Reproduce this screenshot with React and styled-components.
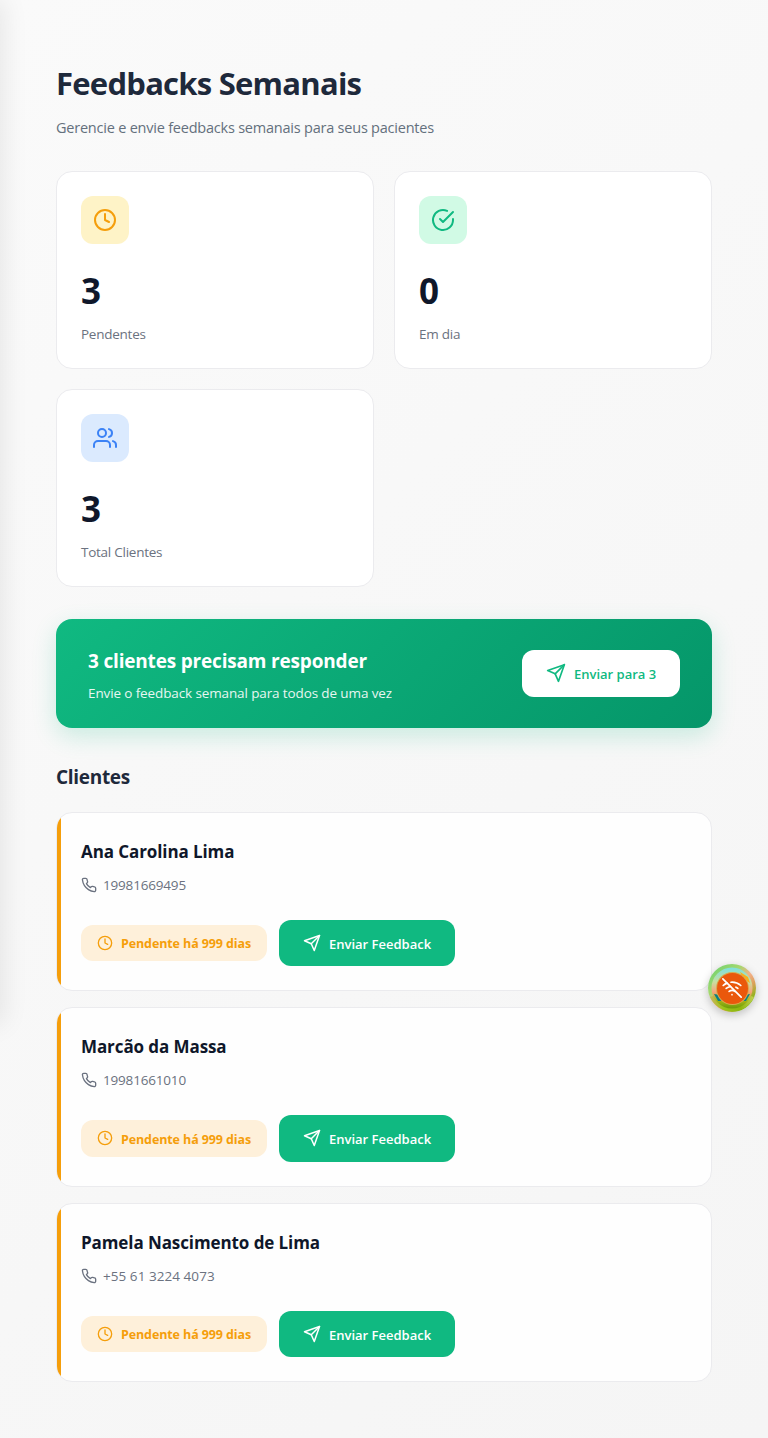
import React from "react";
import styled, { createGlobalStyle } from "styled-components";
import { FiClock, FiCheckCircle, FiUsers, FiSend, FiPhone, FiWifiOff } from "react-icons/fi";

const GlobalStyle = createGlobalStyle`
  * { box-sizing: border-box; }
  body {
    margin: 0;
    font-family: "Segoe UI", "Open Sans", "Noto Sans", sans-serif;
    color: #0f172a;
  }
  h1, h2, h3, p { margin: 0; }
`;

const Page = styled.main`
  position: relative;
  min-height: 1438px;
  padding: 55px 56px 56px;
  overflow: hidden;
  background: linear-gradient(135deg, #fafafa 0%, #f5f5f5 100%);
`;

const DrawerShadow = styled.div`
  position: absolute;
  top: 0;
  left: -280px;
  width: 280px;
  height: 1024px;
  box-shadow: 4px 0 24px rgba(0, 0, 0, 0.08);
`;

const Title = styled.h1`
  font-size: 31px;
  line-height: 56px;
  font-weight: 700;
  letter-spacing: -0.75px;
  color: #1e293b;
`;

const Subtitle = styled.p`
  margin-top: 4px;
  font-size: 14.5px;
  line-height: 26px;
  letter-spacing: -0.22px;
  color: #64707d;
`;

const Stats = styled.section`
  display: grid;
  grid-template-columns: 1fr 1fr;
  gap: 20px;
  margin-top: 30px;
`;

const StatCard = styled.article`
  height: 198px;
  padding: 24px;
  border: 1px solid #ebebee;
  border-radius: 16px;
  background: #fff;
`;

const StatIcon = styled.div`
  display: grid;
  place-items: center;
  width: 48px;
  height: 48px;
  border-radius: 12px;
  color: ${(p) => p.$color};
  background: ${(p) => p.$tint};
  font-size: 24px;
`;

const StatValue = styled.div`
  margin-top: 24px;
  font-size: 35px;
  line-height: 46px;
  font-weight: 700;
`;

const StatLabel = styled.div`
  margin-top: 10px;
  font-size: 13.5px;
  line-height: 20px;
  letter-spacing: -0.25px;
  color: #6b7280;
`;

const Banner = styled.section`
  display: flex;
  align-items: center;
  justify-content: space-between;
  height: 109px;
  margin-top: 32px;
  padding: 0 32px;
  border-radius: 16px;
  color: #fff;
  background: linear-gradient(135deg, #10b981 0%, #059669 100%);
  box-shadow: 0 8px 24px rgba(16, 185, 129, 0.2);
`;

const BannerCopy = styled.div`
  padding-top: 2px;
`;

const BannerTitle = styled.h2`
  font-size: 19px;
  line-height: 28px;
  font-weight: 700;
  letter-spacing: -0.18px;
`;

const BannerText = styled.p`
  margin-top: 8px;
  font-size: 13.5px;
  line-height: 20px;
  letter-spacing: -0.12px;
  opacity: 0.9;
`;

const Button = styled.button`
  display: flex;
  align-items: center;
  gap: 8px;
  height: ${(p) => p.$height}px;
  width: ${(p) => p.$width}px;
  padding: ${(p) => (p.$inverted ? 0 : 2)}px 24px 0;
  border: 0;
  border-radius: 12px;
  font-family: inherit;
  font-size: 13px;
  font-weight: 600;
  white-space: nowrap;
  color: ${(p) => (p.$inverted ? "#10b981" : "#fff")};
  background: ${(p) => (p.$inverted ? "#fff" : "#10b981")};

  svg {
    flex: none;
    font-size: ${(p) => p.$icon}px;
    margin-bottom: 2px;
  }
`;

const SectionTitle = styled.h2`
  margin-top: 35px;
  font-size: 19px;
  line-height: 28px;
  font-weight: 700;
  letter-spacing: -0.3px;
  color: #1e293b;
`;

const ClientList = styled.section`
  display: grid;
  gap: 16px;
  margin-top: 20.7px;
`;

const ClientCard = styled.article`
  position: relative;
  height: 179.5px;
  padding: 25px 24px 24px;
  overflow: hidden;
  border: 1px solid #ebebee;
  border-radius: 16px;
  background: rgba(255, 255, 255, 0.85);

  &::before {
    content: "";
    position: absolute;
    inset: 0 auto 0 0;
    width: 4px;
    background: #f59e0b;
  }
`;

const ClientName = styled.h3`
  font-size: 17px;
  line-height: 28.6px;
  font-weight: 700;
  letter-spacing: -0.09px;
`;

const Phone = styled.p`
  display: flex;
  align-items: center;
  gap: 6px;
  margin-top: 8.7px;
  font-size: 13.5px;
  line-height: 20px;
  letter-spacing: ${(p) => (p.$international ? "0.05px" : "-0.18px")};
  color: #6b7280;

  svg { font-size: 16px; }
`;

const Actions = styled.div`
  display: flex;
  align-items: center;
  gap: 12px;
  margin-top: 24.7px;
`;

const Status = styled.span`
  display: flex;
  align-items: center;
  gap: 8px;
  width: 186px;
  height: 36.5px;
  padding: 2px 16px 0;
  border-radius: 12px;
  font-size: 12.5px;
  font-weight: 700;
  letter-spacing: -0.11px;
  white-space: nowrap;
  color: #f59e0b;
  background: #fef0da;

  svg {
    flex: none;
    margin-bottom: 2px;
    font-size: 16px;
  }
`;

const OfflineBadge = styled.div`
  position: absolute;
  top: 964px;
  left: 708px;
  display: grid;
  place-items: center;
  width: 48px;
  height: 48px;
  border-radius: 50%;
  box-shadow: 0 3px 8px rgba(0, 0, 0, 0.22);
`;

const BadgeArt = styled.svg`
  grid-area: 1 / 1;
`;

const BadgeCore = styled.div`
  grid-area: 1 / 1;
  display: grid;
  place-items: center;
  width: 31px;
  height: 31px;
  border-radius: 50%;
  color: #fff;
  background: #ea580c;
  box-shadow: 0 0 0 1px #d9a94f;
  font-size: 20px;
`;

const stats = [
  { icon: FiClock, color: "#f59e0b", tint: "#fef3c7", value: 3, label: "Pendentes" },
  { icon: FiCheckCircle, color: "#10b981", tint: "#d1fae5", value: 0, label: "Em dia" },
  { icon: FiUsers, color: "#3b82f6", tint: "#dbeafe", value: 3, label: "Total Clientes" },
];

const clients = [
  { name: "Ana Carolina Lima", phone: "19981669495" },
  { name: "Marcão da Massa", phone: "19981661010" },
  { name: "Pamela Nascimento de Lima", phone: "+55 61 3224 4073" },
];

export default function App() {
  return (
    <>
      <GlobalStyle />
      <Page>
        <DrawerShadow />
        <Title>Feedbacks Semanais</Title>
        <Subtitle>Gerencie e envie feedbacks semanais para seus pacientes</Subtitle>
        <Stats>
          {stats.map(({ icon: Icon, ...s }) => (
            <StatCard key={s.label}>
              <StatIcon $color={s.color} $tint={s.tint}><Icon /></StatIcon>
              <StatValue>{s.value}</StatValue>
              <StatLabel>{s.label}</StatLabel>
            </StatCard>
          ))}
        </Stats>
        <Banner>
          <BannerCopy>
            <BannerTitle>3 clientes precisam responder</BannerTitle>
            <BannerText>Envie o feedback semanal para todos de uma vez</BannerText>
          </BannerCopy>
          <Button $inverted $height={47} $width={158} $icon={20}>
            <FiSend />
            <span>Enviar para 3</span>
          </Button>
        </Banner>
        <SectionTitle>Clientes</SectionTitle>
        <ClientList>
          {clients.map((c) => (
            <ClientCard key={c.name}>
              <ClientName>{c.name}</ClientName>
              <Phone $international={c.phone.startsWith("+")}>
                <FiPhone />
                <span>{c.phone}</span>
              </Phone>
              <Actions>
                <Status><FiClock /><span>Pendente há 999 dias</span></Status>
                <Button $height={46.5} $width={176} $icon={18}>
                  <FiSend />
                  <span>Enviar Feedback</span>
                </Button>
              </Actions>
            </ClientCard>
          ))}
        </ClientList>
        <OfflineBadge>
          <BadgeArt width="48" height="48" viewBox="0 0 48 48" fill="none">
            <defs>
              <linearGradient id="rim" x1="4" y1="8" x2="36" y2="44" gradientUnits="userSpaceOnUse">
                <stop offset="0" stopColor="#7bd36f" />
                <stop offset="0.3" stopColor="#a5d86e" />
                <stop offset="0.55" stopColor="#f3b089" />
                <stop offset="0.75" stopColor="#dca05a" />
                <stop offset="1" stopColor="#7fb80e" />
              </linearGradient>
              <linearGradient id="ring" x1="24" y1="4" x2="24" y2="44" gradientUnits="userSpaceOnUse">
                <stop offset="0" stopColor="#7fe0dc" />
                <stop offset="0.35" stopColor="#c8dfa0" />
                <stop offset="0.6" stopColor="#f7a27c" />
                <stop offset="0.8" stopColor="#a9b91a" />
                <stop offset="1" stopColor="#6f9c0a" />
              </linearGradient>
              <linearGradient id="grass" x1="2" y1="33" x2="46" y2="33" gradientUnits="userSpaceOnUse">
                <stop offset="0" stopColor="#c9b45c" />
                <stop offset="0.3" stopColor="#9cc41a" />
                <stop offset="0.7" stopColor="#8cb60f" />
                <stop offset="1" stopColor="#c2cf55" />
              </linearGradient>
            </defs>
            <circle cx="24" cy="24" r="24" fill="url(#rim)" />
            <path d="M2 33A24 24 0 0 0 46 33L40 31A17 17 0 0 1 8 31Z" fill="url(#grass)" />
            <circle cx="24" cy="24" r="18" stroke="url(#ring)" strokeWidth="5" />
            <path d="M32 8L40 13L42 19L35 15Z" fill="#fbae17" />
            <path d="M6 30L12 31L15 37L10 37Z" fill="#087f86" />
            <path d="M42 30L36 31L33 37L38 37Z" fill="#087f86" />
          </BadgeArt>
          <BadgeCore><FiWifiOff /></BadgeCore>
        </OfflineBadge>
      </Page>
    </>
  );
}
